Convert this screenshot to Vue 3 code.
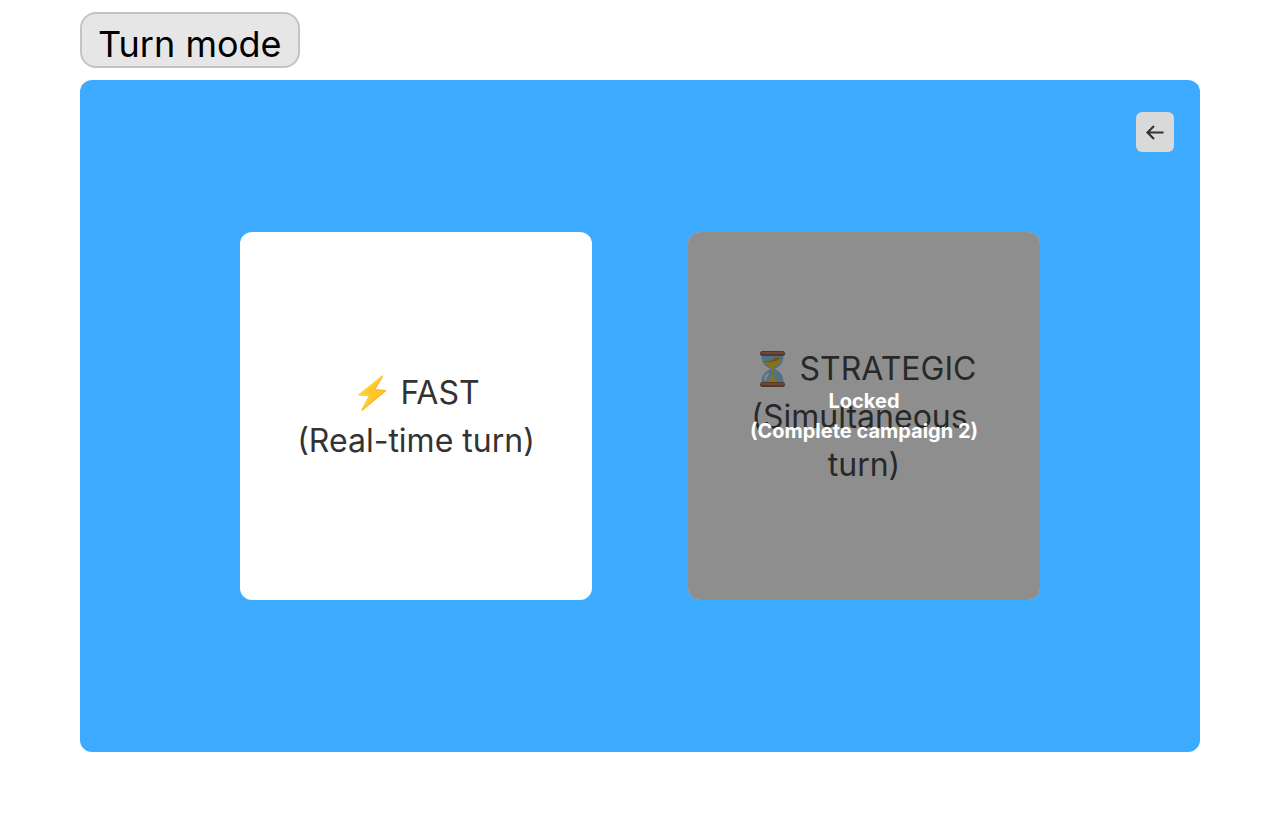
<script setup>
const emit = defineEmits(['back', 'select'])
</script>

<template>
  <main class="page">
    <h1 class="title">Turn mode</h1>
    <section class="panel">
      <button class="back" type="button" aria-label="Back" @click="emit('back')">
        <svg width="24" height="24" viewBox="0 0 24 24" aria-hidden="true">
          <path d="M20.500 12.500H4.500M11 6L4.500 12.500L11 19" fill="none" stroke="currentColor" stroke-width="2.200" />
        </svg>
      </button>
      <div class="modes">
        <button class="mode" type="button" @click="emit('select', 'fast')">
          <span class="name">
            <svg class="emoji" viewBox="0 0 40 40" aria-hidden="true">
              <defs>
                <linearGradient id="bolt" x1="0" y1="0" x2="1" y2="1">
                  <stop offset="0" stop-color="#ffd62e" />
                  <stop offset="0.5" stop-color="#fec62b" />
                  <stop offset="1" stop-color="#ffc51b" />
                </linearGradient>
              </defs>
              <path d="M30 2.500L6.300 21.600Q5.600 22.500 6.600 22.500L16.500 23.200L9.300 36.800Q9.200 38.600 10.800 37.300L34 18.200Q34.800 17 33.200 16.900L23.300 16.200L30.900 3.200Q31.200 2 30 2.500Z" fill="url(#bolt)" />
              <path d="M29.500 4L8 21.500L18.500 22L12 34.500" fill="none" stroke="#ffe04a" stroke-width="0.700" />
              <path d="M30.700 3.500L22.700 16.700L33.500 17.600L10.500 37" fill="none" stroke="#f5ab25" stroke-width="0.800" />
            </svg>
            FAST
          </span>
          <span>(Real-time turn)</span>
        </button>
        <button class="mode" type="button" disabled>
          <span class="name">
            <svg class="emoji" viewBox="0 0 40 40" aria-hidden="true">
              <path d="M9.500 5C9 13 12 17 18.500 20C12 23 9 27 9.500 35H31.500C32 27 29 23 22.500 20C29 17 32 13 31.500 5Z" fill="#80c8ee" />
              <path d="M12 13Q18 13 21 11Q25 8 29 9Q28 15 22 18Q21.500 19 21.500 27Q23 31 29 34H12Q19 31 19.500 27V19Q16 18 12 13Z" fill="#f6c51b" />
              <path d="M12 12Q18 13 21 10Q25 7 29 9Q24 14 12 13Z" fill="#c88d0c" />
              <path d="M13.500 30Q13 27 16 25" fill="none" stroke="#d9f2ff" stroke-width="2.500" stroke-linecap="round" />
              <rect x="8" y="2" width="25" height="5" rx="2.500" fill="#8b4f37" />
              <rect x="8" y="33" width="25" height="5" rx="2.500" fill="#8b4f37" />
              <path d="M10 4H31M10 35H31" stroke="#b87256" stroke-width="2" stroke-linecap="round" />
            </svg>
            STRATEGIC
          </span>
          <span class="detail">(Simultaneous turn)</span>
          <span class="lock">
            <span>Locked</span>
            <span>(Complete campaign 2)</span>
          </span>
        </button>
      </div>
    </section>
  </main>
</template>

<style>
body {
  margin: 0;
  background: #fff;
}
</style>

<style scoped>
.page {
  display: flex;
  flex-direction: column;
  align-items: flex-start;
  gap: 12px;
  padding: 12px 80px 80px;
  font-family: Inter, "Liberation Sans", sans-serif;
}
.title {
  box-sizing: border-box;
  margin: 0;
  padding: 8px 16px 0;
  border: 2px solid #c4c4c4;
  border-radius: 16px;
  background: #e6e6e6;
  color: #000;
  font-size: 36px;
  font-weight: 400;
  line-height: 44px;
}
.panel {
  box-sizing: border-box;
  width: 100%;
  display: flex;
  flex-direction: column;
  gap: 80px;
  padding: 32px 26px 152px;
  border-radius: 12px;
  background: #3dabff;
}
.back {
  align-self: flex-end;
  display: flex;
  align-items: center;
  justify-content: center;
  width: 38px;
  height: 40px;
  padding: 0;
  border: 0;
  border-radius: 6px;
  background: #d9d9d9;
  color: #333;
}
.modes {
  display: flex;
  justify-content: center;
  gap: 96px;
}
.mode {
  position: relative;
  box-sizing: border-box;
  display: flex;
  flex-direction: column;
  align-items: center;
  justify-content: center;
  flex: 0 1 352px;
  min-height: 368px;
  padding: 34px 48px 32px;
  overflow: hidden;
  border: 0;
  border-radius: 12px;
  background: #fff;
  color: #333;
  font-family: inherit;
  font-size: 32px;
  font-weight: 400;
  line-height: 48px;
  text-align: center;
}
.name {
  display: flex;
  align-items: center;
  gap: 8px;
}
.detail {
  white-space: break-spaces;
}
.emoji {
  width: 40px;
  height: 40px;
}
.lock {
  position: absolute;
  inset: 0;
  display: flex;
  flex-direction: column;
  align-items: center;
  justify-content: center;
  background: rgba(30, 30, 30, 0.5);
  color: #fff;
  font-size: 20px;
  font-weight: 700;
  line-height: 30px;
}
</style>
